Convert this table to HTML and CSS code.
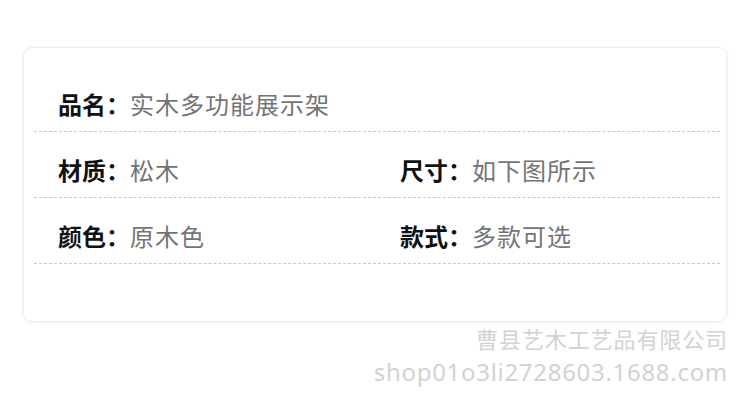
FILE: index.html
```html
<!DOCTYPE html>
<html lang="zh-CN">
<head>
    <meta charset="UTF-8">
    <meta name="viewport" content="width=device-width, initial-scale=1.0">
    <title>实木多功能展示架 - 参数</title>
    <link rel="stylesheet" href="styles.css">
</head>
<body>
    <div class="card">
        <div class="row">
            <div class="item">
                <span class="label">品名：</span>
                <span class="value">实木多功能展示架</span>
            </div>
        </div>
        <div class="row">
            <div class="item">
                <span class="label">材质：</span>
                <span class="value">松木</span>
            </div>
            <div class="item">
                <span class="label">尺寸：</span>
                <span class="value">如下图所示</span>
            </div>
        </div>
        <div class="row">
            <div class="item">
                <span class="label">颜色：</span>
                <span class="value">原木色</span>
            </div>
            <div class="item">
                <span class="label">款式：</span>
                <span class="value">多款可选</span>
            </div>
        </div>
    </div>

    <div class="watermark">
        <div class="company">曹县艺木工艺品有限公司</div>
        <div class="shop">shop01o3li2728603.1688.com</div>
    </div>
</body>
</html>
```

FILE: styles.css
```css
* {
    margin: 0;
    padding: 0;
    box-sizing: border-box;
}

body {
    font-family: "Noto Sans CJK SC", "Noto Sans", sans-serif;
    background: #fff;
    color: #111;
    width: 750px;
    height: 403px;
    overflow: hidden;
    padding: 47px 23px 0 23px;
}

.card {
    width: 704px;
    height: 275px;
    border: 1px solid #ececec;
    border-radius: 9px;
    box-shadow: 0 1px 4px rgba(0, 0, 0, 0.06);
    padding: 18px 6px 0 10px;
}

.row {
    display: grid;
    grid-template-columns: 342px 1fr;
    height: 66px;
    padding: 24px 0 0 24px;
    border-bottom: 1px dashed #c8c8c8;
}

.item {
    display: flex;
    align-items: center;
    height: 26px;
}

.label {
    font-size: 24px;
    font-weight: 700;
    color: #111;
    width: 72px;
}

.value {
    font-size: 24px;
    color: #747474;
    letter-spacing: 1px;
}

.watermark {
    text-align: right;
    color: #d2d2d2;
}

.company {
    font-size: 22px;
    letter-spacing: 0.9px;
    line-height: 36px;
    margin-top: -2px;
    margin-right: -1px;
}

.shop {
    font-family: "Noto Sans", sans-serif;
    font-size: 24px;
    letter-spacing: 0.7px;
    line-height: 32px;
    margin-right: -1px;
}
```
